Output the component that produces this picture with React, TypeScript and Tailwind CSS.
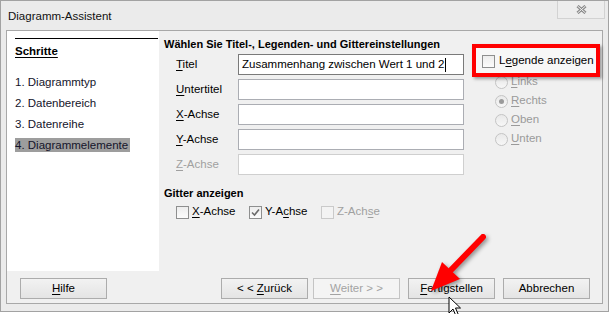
import React from 'react';

const Acc = ({ children }: { children: React.ReactNode }) => (
  <span className="underline underline-offset-2">{children}</span>
);

const CheckBox = ({ checked = false, disabled = false }: { checked?: boolean; disabled?: boolean }) => (
  <span
    className={`inline-flex h-[13px] w-[13px] shrink-0 items-center justify-center border ${
      disabled ? 'border-[#cacaca] bg-[#f3f3f3]' : 'border-[#8e8f8f] bg-linear-to-b from-[#ededed] to-[#fcfcfc]'
    }`}
  >
    {checked && (
      <svg width="9" height="9" viewBox="0 0 9 9">
        <path d="M1 4.5 L3.5 7 L8 1.5" fill="none" stroke="#6b6b6b" strokeWidth="1.6" />
      </svg>
    )}
  </span>
);

const Radio = ({ checked = false }: { checked?: boolean }) => (
  <span className="inline-flex h-[13px] w-[13px] shrink-0 items-center justify-center rounded-full border border-[#c4c4c4] bg-linear-to-b from-[#e9e9e9] to-[#f7f7f7]">
    {checked && <span className="h-[5px] w-[5px] rounded-full bg-[#9a9a9a]" />}
  </span>
);

const Button = ({ children, disabled = false }: { children: React.ReactNode; disabled?: boolean }) => (
  <div
    className={`h-[21px] w-[87px] border text-center leading-[19px] ${
      disabled
        ? 'border-[#c4c4c4] bg-[#f4f4f4] text-[#a3a3a3]'
        : 'border-[#acacac] bg-linear-to-b from-[#f2f2f2] to-[#e4e4e4] text-black'
    }`}
  >
    {children}
  </div>
);

const fields: { label: React.ReactNode; value?: string; disabled?: boolean; focus?: boolean }[] = [
  { label: <><Acc>T</Acc>itel</>, value: 'Zusammenhang zwischen Wert 1 und 2', focus: true },
  { label: <><Acc>U</Acc>ntertitel</> },
  { label: <><Acc>X</Acc>-Achse</> },
  { label: <><Acc>Y</Acc>-Achse</> },
  { label: <><Acc>Z</Acc>-Achse</>, disabled: true },
];

const steps = ['1. Diagrammtyp', '2. Datenbereich', '3. Datenreihe', '4. Diagrammelemente'];

export default function App() {
  return (
    <div className="relative h-[314px] w-[611px] overflow-hidden bg-white font-['Liberation_Sans',Arial,sans-serif] text-[11.5px] text-black">
      <div className="flex h-[312px] w-[609px] flex-col border border-[#a2a2a2] bg-[#ebebeb]">
        {/* title bar */}
        <div className="flex h-[29px] items-start justify-between">
          <span className="pl-[7px] pt-[7px] text-[11.5px] leading-[16px] text-[#111]">Diagramm-Assistent</span>
          <div className="mr-[3px] flex h-[18px] w-[48px] items-center justify-center border border-t-0 border-[#d2d2d2] bg-[#ededed]">
            <svg width="11" height="9" viewBox="0 0 11 9">
              <path d="M1.5 1 L9.5 8 M9.5 1 L1.5 8" stroke="#8a8a8a" strokeWidth="3" />
              <path d="M1.5 1 L9.5 8 M9.5 1 L1.5 8" stroke="#f4f4f4" strokeWidth="1" />
            </svg>
          </div>
        </div>

        {/* client area */}
        <div className="mx-[5px] mb-[7px] flex flex-1 flex-col border border-[#a8a8a8] bg-[#f0f0f0]">
          <div className="flex h-[240px]">
            {/* steps */}
            <div className="w-[152px] bg-white pl-[8px] pr-[1px] pt-[7px]">
              <div className="border-t border-black" />
              <div className="mt-[4px] font-bold leading-[16px] underline underline-offset-2">Schritte</div>
              <div className="mt-[15px] flex flex-col gap-[5px]">
                {steps.map((s, i) => (
                  <div key={s} className="h-[16px] leading-[16px] text-[#14142a]">
                    {i === 3 ? (
                      <span className="mt-[1px] inline-block bg-[#9d9d9d] pr-[2px] leading-[14px]">{s}</span>
                    ) : (
                      s
                    )}
                  </div>
                ))}
              </div>
            </div>

            {/* settings */}
            <div className="flex-1 pl-[5px] pt-[5px]">
              <div className="text-[11px] font-bold leading-[16px]">Wählen Sie Titel-, Legenden- und Gittereinstellungen</div>
              <div className="flex">
                <div className="w-[300px]">
                  <div className="mt-[2px] flex flex-col gap-[4px]">
                    {fields.map((f, i) => (
                      <div key={i} className="flex h-[21px] items-center">
                        <span className={`w-[74px] pl-[12px] ${f.disabled ? 'text-[#a0a0a0]' : ''}`}>{f.label}</span>
                        <div
                          className={`flex h-[21px] w-[226px] items-center border bg-white pl-[3px] ${
                            f.focus ? 'border-[#7a7a7a]' : 'border-[#abadb3]'
                          } ${f.disabled ? 'border-[#cfcfcf]' : ''}`}
                        >
                          {f.value && (
                            <>
                              <span>{f.value}</span>
                              <span className="ml-[1px] h-[14px] w-px bg-black" />
                            </>
                          )}
                        </div>
                      </div>
                    ))}
                  </div>
                  <div className="mt-[10px] text-[11px] font-bold leading-[16px]">Gitter anzeigen</div>
                  <div className="mt-[3px] flex h-[16px] items-center pl-[12px]">
                    <div className="flex w-[73px] items-center gap-[3px]">
                      <CheckBox />
                      <span><Acc>X</Acc>-Achse</span>
                    </div>
                    <div className="flex w-[72px] items-center gap-[3px]">
                      <CheckBox checked />
                      <span>Y-A<Acc>c</Acc>hse</span>
                    </div>
                    <div className="flex items-center gap-[3px] text-[#a0a0a0]">
                      <CheckBox disabled />
                      <span>Z-Ach<Acc>s</Acc>e</span>
                    </div>
                  </div>
                </div>

                {/* legend */}
                <div className="ml-[8px] flex-1">
                  <div className="relative z-10 mt-[1px] flex h-[16px] items-center pl-[10px]">
                    <div className="absolute -top-[9px] left-0 h-[33px] w-[128px] border-4 border-[#ff0000] bg-[#f7f7f7] shadow-[2px_2px_3px_rgba(0,0,0,0.35)]" />
                    <div className="relative flex items-center gap-[4px]">
                      <CheckBox />
                      <span>L<Acc>e</Acc>gende anzeigen</span>
                    </div>
                  </div>
                  <div className="mt-[5px] flex flex-col gap-[3px] pl-[23px] text-[#9a9a9a]">
                    {[
                      ['L', 'inks', false],
                      ['R', 'echts', true],
                      ['O', 'ben', false],
                      ['U', 'nten', false],
                    ].map(([a, rest, on]) => (
                      <div key={rest as string} className="flex h-[16px] items-center gap-[3px]">
                        <Radio checked={on as boolean} />
                        <span><Acc>{a as string}</Acc>{rest as string}</span>
                      </div>
                    ))}
                  </div>
                </div>
              </div>
            </div>
          </div>

          {/* buttons */}
          <div className="flex items-center pl-[13px] pr-[12px] pt-[7px]">
            <Button><Acc>H</Acc>ilfe</Button>
            <div className="ml-auto flex items-center">
              <Button>&lt; &lt; <Acc>Z</Acc>urück</Button>
              <div className="ml-[5px]">
                <Button disabled><Acc>W</Acc>eiter &gt; &gt;</Button>
              </div>
              <div className="ml-[8px]">
                <Button><Acc>F</Acc>ertigstellen</Button>
              </div>
              <div className="ml-[8px]">
                <Button>Abbrechen</Button>
              </div>
            </div>
          </div>
        </div>
      </div>

      {/* annotation arrow + cursor */}
      <svg className="pointer-events-none absolute left-0 top-0" width="611" height="314" viewBox="0 0 611 314">
        <g style={{ filter: 'drop-shadow(2px 2px 2px rgba(0,0,0,0.4))' }}>
          <line x1="483" y1="237" x2="451" y2="270" stroke="#ff0000" strokeWidth="6" strokeLinecap="round" />
          <polygon points="431,291 460,279 442,262" fill="#ff0000" />
        </g>
        <path
          d="M449 297 L449 313 L453 309 L456 316 L458.5 315 L455.5 308 L460.5 308 Z"
          fill="#fff"
          stroke="#000"
          strokeWidth="1"
          strokeLinejoin="round"
        />
      </svg>
    </div>
  );
}
